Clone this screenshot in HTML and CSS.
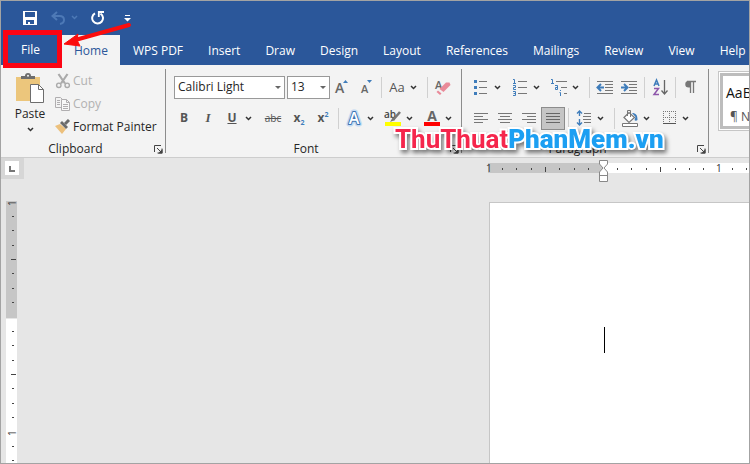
FILE: index.html
```html
<!DOCTYPE html>
<html lang="en">
<head>
<meta charset="utf-8">
<title>Document - Word</title>
<link rel="stylesheet" href="styles.css">
</head>
<body>
<svg class="defs" aria-hidden="true">
  <symbol id="chev" viewBox="0 0 7 5"><path d="M1 1l2.500 2.500L6 1" fill="none" stroke="#333" stroke-width="1.500"/></symbol>
  <symbol id="launch" viewBox="0 0 9 9"><path d="M.5 7V.5H7M3 3l4 4M8 3.500V8H3.500" fill="none" stroke="#444"/><path d="M8.500 4v4.500H4z" fill="#444"/></symbol>
</svg>
<div class="window">
  <header class="top">
    <div class="quick">
      <button class="q-save" aria-label="Save"><svg width="14" height="14" viewBox="0 0 14 14"><path d="M0 0h14v14H0zM2 1v5h10V1zM3 9v4h2v-2h2v2h4V9z" fill="#fff" fill-rule="evenodd"/></svg></button>
      <button class="q-undo" aria-label="Undo"><svg width="28" height="14" viewBox="0 0 28 14"><path d="M6 1L1.500 5 6 9M2 5h6.500c3 0 4.500 1.600 4.500 4s-1.500 3.500-4 4" fill="none" stroke="#4d79b6" stroke-width="2"/><path d="M21 5l2.500 2.500L26 5" fill="none" stroke="#4d79b6" stroke-width="1.500"/></svg></button>
      <button class="q-redo" aria-label="Repeat"><svg width="14" height="14" viewBox="0 0 14 14"><path d="M9.500 2.600A5.400 5.400 0 1 1 4 2.400" fill="none" stroke="#fff" stroke-width="2"/><path d="M7.800 6V1H13" fill="none" stroke="#fff" stroke-width="1.800"/></svg></button>
      <button class="q-more" aria-label="Customize toolbar"><svg width="7" height="7" viewBox="0 0 7 7"><path d="M1 0h5v1H1zM0 3h7L3.500 6.500z" fill="#fff"/></svg></button>
    </div>
    <nav class="tabs">
      <a class="file" href="#">File</a>
      <a class="active" href="#">Home</a>
      <a href="#">WPS PDF</a>
      <a href="#">Insert</a>
      <a href="#">Draw</a>
      <a href="#">Design</a>
      <a href="#">Layout</a>
      <a href="#">References</a>
      <a href="#">Mailings</a>
      <a href="#">Review</a>
      <a href="#">View</a>
      <a href="#">Help</a>
    </nav>
  </header>

  <section class="ribbon">
    <div class="group clipboard">
      <div class="clip-tools">
        <button class="paste">
          <svg width="28" height="30" viewBox="0 0 28 30"><path d="M0 4h24v24H0z" fill="#ecc67c"/><path d="M5 6V3h4a3 3 0 0 1 6 0h4v3z" fill="#6d6d6d"/><circle cx="12" cy="2.800" r="1" fill="#f3f3f3"/><path d="M14.500 11.500h8l5 5v13h-13z" fill="#fff" stroke="#6d6d6d"/><path d="M22.500 11.500v5h5" fill="none" stroke="#6d6d6d"/></svg>
          <span>Paste</span>
          <svg width="7" height="5"><use href="#chev"/></svg>
        </button>
        <div class="clip-list">
          <button disabled><svg width="16" height="16" viewBox="0 0 16 16"><path d="M3.500 1l6.500 9.500M12.500 1L6 10.500" stroke="#aaa" stroke-width="2.200"/><circle cx="3.800" cy="12.300" r="2.200" fill="none" stroke="#aaa" stroke-width="1.400"/><circle cx="12.200" cy="12.300" r="2.200" fill="none" stroke="#aaa" stroke-width="1.400"/></svg>Cut</button>
          <button disabled><svg width="16" height="16" viewBox="0 0 16 16"><path d="M6 11.500H.5V1.500h5l2 2" fill="none" stroke="#b0aeb0"/><path d="M2 4.500h3M2 6.500h3M2 8.500h3" stroke="#b0aeb0"/><path d="M6.500 3.500h5l3 3v8h-8z" fill="#f8f8f8" stroke="#b0aeb0"/><path d="M11.500 3.500v3h3M8 8.500h5M8 10.500h5M8 12.500h5" fill="none" stroke="#b0aeb0"/></svg>Copy</button>
          <button><svg width="16" height="16" viewBox="0 0 16 16"><path d="M0 7l5-2 6 5-4 5z" fill="#ecc07c"/><path d="M5 4l2-2 6 6-2 2z" fill="#6b6b6b"/><path d="M10 5l4-4" stroke="#6b6b6b" stroke-width="3"/></svg>Format Painter</button>
        </div>
      </div>
      <footer>Clipboard<button class="launcher" aria-label="Clipboard options"><svg width="9" height="9"><use href="#launch"/></svg></button></footer>
    </div>

    <div class="group font">
      <div class="row">
        <label class="combo family"><select aria-label="Font"><option>Calibri Light</option></select></label>
        <label class="combo size"><select aria-label="Font size"><option>13</option></select></label>
        <button class="tool" aria-label="Grow font"><svg width="18" height="18" viewBox="0 0 18 18"><text x="2" y="15" class="glyph grow">A</text><path d="M10 5l2.500-3L15 5z" fill="#3f7dbb"/></svg></button>
        <button class="tool" aria-label="Shrink font"><svg width="18" height="18" viewBox="0 0 18 18"><text x="4" y="15" class="glyph">A</text><path d="M10 2h5l-2.500 3z" fill="#3f7dbb"/></svg></button>
        <i class="sep"></i>
        <button class="split case"><span>Aa</span><svg width="7" height="5"><use href="#chev"/></svg></button>
        <i class="sep"></i>
        <button class="tool" aria-label="Clear formatting"><svg width="18" height="18" viewBox="0 0 18 18"><text x="1" y="11" class="glyph">A</text><path d="M5.500 11l6.500-6.500h3.500l1 2.500-7 7z" fill="#e98a99"/><path d="M4 12.500l3.500 3-1.500 1.500-3.500-3z" fill="#e98a99"/></svg></button>
      </div>
      <div class="row">
        <button class="tool bold">B</button>
        <button class="tool italic">I</button>
        <button class="split under"><span>U</span><svg width="7" height="5"><use href="#chev"/></svg></button>
        <button class="tool wide strike">abc</button>
        <button class="tool script">x<sub>2</sub></button>
        <button class="tool script">x<sup>2</sup></button>
        <i class="sep"></i>
        <button class="split" aria-label="Text effects"><svg width="18" height="18" viewBox="0 0 18 18"><text x="9" y="15" class="glyph halo">A</text><text x="9" y="15" class="glyph effect">A</text></svg><svg width="7" height="5"><use href="#chev"/></svg></button>
        <button class="split" aria-label="Highlight"><svg width="18" height="18" viewBox="0 0 18 18"><text x="0" y="9" class="glyph ab">ab</text><path d="M16 3L9 11" stroke="#777" stroke-width="2.600"/><path d="M9 8l-3 5 5-2z" fill="#777"/><path d="M1 13h16v4H1z" fill="#ff0"/></svg><svg width="7" height="5"><use href="#chev"/></svg></button>
        <button class="split" aria-label="Font color"><svg width="18" height="18" viewBox="0 0 18 18"><text x="9" y="12" class="glyph color">A</text><path d="M1 13h16v4H1z" fill="#f00"/></svg><svg width="7" height="5"><use href="#chev"/></svg></button>
      </div>
      <footer>Font<button class="launcher" aria-label="Font options"><svg width="9" height="9"><use href="#launch"/></svg></button></footer>
    </div>

    <div class="group paragraph">
      <div class="row">
        <button class="split" aria-label="Bullets"><svg width="18" height="18" viewBox="0 0 18 18"><path d="M7 3.500h8M7 9.500h8M7 15.500h8" stroke="#777"/><path d="M2 2h3v3H2zM2 8h3v3H2zM2 14h3v3H2z" fill="#3f7dbb"/></svg><svg width="7" height="5"><use href="#chev"/></svg></button>
        <button class="split" aria-label="Numbering"><svg width="18" height="18" viewBox="0 0 18 18"><path d="M7 3.500h9M7 9.500h9M7 15.500h9" stroke="#777"/><path d="M2 1.500h1.500V5M2 5.500h3M2 7.500h2.500v2h-2v2H5M2 13.500h2.500v4H2M2.500 15.500h2" fill="none" stroke="#3f7dbb"/></svg><svg width="7" height="5"><use href="#chev"/></svg></button>
        <button class="split" aria-label="Multilevel list"><svg width="18" height="18" viewBox="0 0 18 18"><path d="M6 3.500h11M11 9.500h6M14 15.500h3" stroke="#777"/><path d="M1 1.500h1.500V5M1 5.500h3M5 7.500h2.500v4H5.500v-2h2M10.500 12v1M9.500 14.500h1V18" fill="none" stroke="#3f7dbb"/></svg><svg width="7" height="5"><use href="#chev"/></svg></button>
        <i class="sep"></i>
        <button class="tool" aria-label="Decrease indent"><svg width="18" height="18" viewBox="0 0 18 18"><path d="M1 3.500h16M9 6.500h8M9 9.500h8M9 12.500h8M1 15.500h16" stroke="#777"/><path d="M8 9.500H2M5 6L1.500 9.500 5 13" fill="none" stroke="#3f7dbb" stroke-width="2"/></svg></button>
        <button class="tool" aria-label="Increase indent"><svg width="18" height="18" viewBox="0 0 18 18"><path d="M1 3.500h16M9 6.500h8M9 9.500h8M9 12.500h8M1 15.500h16" stroke="#777"/><path d="M1 9.500h6M4 6l3.500 3.500L4 13" fill="none" stroke="#3f7dbb" stroke-width="2"/></svg></button>
        <i class="sep"></i>
        <button class="tool" aria-label="Sort"><svg width="18" height="18" viewBox="0 0 18 18"><path d="M3 8l2.500-6L8 8M4 6h3" fill="none" stroke="#3f7dbb" stroke-width="1.500"/><path d="M3 10.500h4.500L3 16.500h5" fill="none" stroke="#8e57ab" stroke-width="1.500"/><path d="M13.500 2v14M10.500 12.500l3 3.500 3-3.500" fill="none" stroke="#666" stroke-width="1.300"/></svg></button>
        <i class="sep"></i>
        <button class="tool" aria-label="Show paragraph marks"><svg width="18" height="18" viewBox="0 0 18 18"><path d="M8 3v6.500H6.500a3.200 3.200 0 0 1 0-6.500z" fill="#777"/><path d="M5 3.500h9M8.500 3v12M11.500 3v12" stroke="#777" stroke-width="1.300"/></svg></button>
      </div>
      <div class="row">
        <button class="tool" aria-label="Align left"><svg width="18" height="18" viewBox="0 0 18 18"><path d="M2 4.500h14M2 7.500h9M2 10.500h14M2 13.500h9" stroke="#777"/></svg></button>
        <button class="tool" aria-label="Center"><svg width="18" height="18" viewBox="0 0 18 18"><path d="M2 4.500h14M4 7.500h10M2 10.500h14M4 13.500h10" stroke="#777"/></svg></button>
        <button class="tool" aria-label="Align right"><svg width="18" height="18" viewBox="0 0 18 18"><path d="M2 4.500h14M7 7.500h9M2 10.500h14M7 13.500h9" stroke="#777"/></svg></button>
        <button class="tool pressed" aria-label="Justify"><svg width="18" height="18" viewBox="0 0 18 18"><path d="M2 4.500h14M2 7.500h14M2 10.500h14M2 13.500h14" stroke="#666"/></svg></button>
        <i class="sep"></i>
        <button class="split" aria-label="Line spacing"><svg width="18" height="18" viewBox="0 0 18 18"><path d="M4.500 2v5M4.500 10v6M2 4.500L4.500 2 7 4.500M2 13.500L4.500 16 7 13.500" fill="none" stroke="#3f7dbb" stroke-width="1.400"/><path d="M9 4.500h7M8 7.500h8M8 10.500h8M9 13.500h7" stroke="#777"/></svg><svg width="7" height="5"><use href="#chev"/></svg></button>
        <i class="sep"></i>
        <button class="split" aria-label="Shading"><svg width="18" height="18" viewBox="0 0 18 18"><path d="M3 8.500l5-5 5.500 5L8 13.500z" fill="#fff" stroke="#777" stroke-width="1.200"/><path d="M6.500 7V1.500h3V8" fill="none" stroke="#777"/><path d="M11 4c4 0 5.500 2 5.500 7-1 1-2.500 1-3 0l1-3z" fill="#3f7dbb"/><path d="M1.500 14.500h15v3h-15z" fill="#fff" stroke="#777"/></svg><svg width="7" height="5"><use href="#chev"/></svg></button>
        <button class="split" aria-label="Borders"><svg width="18" height="18" viewBox="0 0 18 18"><path d="M3 2.500h13M3 8.500h13M3.500 2v12M9.500 2v12M15.500 2v12" stroke="#777" stroke-dasharray="1 1"/><path d="M3 14.500h13" stroke="#555"/></svg><svg width="7" height="5"><use href="#chev"/></svg></button>
      </div>
      <footer>Paragraph<button class="launcher" aria-label="Paragraph options"><svg width="9" height="9"><use href="#launch"/></svg></button></footer>
    </div>

    <div class="gallery">
      <button class="style"><span class="sample">AaBbCcDd</span><span class="name">¶ Normal</span></button>
    </div>
  </section>

  <main class="workspace">
    <div class="corner"><button aria-label="Tab stop"><svg width="14" height="14" viewBox="0 0 14 14"><path d="M4 5h2v4h4v2H4z" fill="#777"/></svg></button></div>
    <div class="hruler">
      <svg width="100%" height="12">
        <rect width="115" height="10" fill="#c6c6c6"/>
        <rect x="115" width="100%" height="10" fill="#fff"/>
        <path d="M14.500 5v2M28.500 5v2M43.500 5v2M57.500 4v5M71.500 5v2M86.500 5v2M100.500 5v2M129.500 5v2M143.500 5v2M158.500 5v2M172.500 4v5M187.500 5v2M201.500 5v2M215.500 5v2M244.500 5v2M258.500 5v2" stroke="#444"/>
        <text x="-2" y="9">1</text><text x="228" y="9">1</text>
      </svg>
      <svg class="indent" width="9" height="22" viewBox="0 0 9 22"><path d="M.5.5h8V4L5 8l3.500 4v9.500h-8V12L4 8 .5 4zM.5 15.500h8" fill="#fff" stroke="#888"/></svg>
    </div>
    <div class="vruler">
      <svg width="12" height="100%">
        <rect width="11" height="117" fill="#c6c6c6"/>
        <rect y="118" width="11" height="100%" fill="#fff"/>
        <path d="M6 15.500h2M6 29.500h2M6 44.500h2M5 58.500h5M6 72.500h2M6 87.500h2M6 101.500h2M6 130.500h2M6 144.500h2M6 159.500h2M5 173.500h5M6 187.500h2M6 202.500h2M6 216.500h2M6 245.500h2M6 259.500h2" stroke="#444"/>
        <text transform="translate(10 5) rotate(-90)">1</text><text transform="translate(10 235) rotate(-90)">1</text>
      </svg>
    </div>
    <article class="page" contenteditable="true" aria-label="Document"><i class="caret"></i></article>
  </main>

  <div class="file-frame"></div>
  <svg class="arrow" width="72" height="30" viewBox="0 0 72 30"><path d="M66 4L14 18.500" stroke="#fb0d0d" stroke-width="4" stroke-linecap="round"/><path d="M1 23L15 13l-1 6 3 6z" fill="#fb0d0d" stroke="#fb0d0d"/></svg>
  <div class="mark"><span>ThuThuat</span><b>PhanMem.vn</b></div>
</div>
</body>
</html>
```
FILE: styles.css
```css
* { box-sizing: border-box; }
body {
  margin: 0;
  font: 12px/16px "Open Sans", "Noto Sans", sans-serif;
  color: #262626;
}
button { font: inherit; color: inherit; background: none; border: 0; padding: 0; }
svg { display: block; flex: none; }
.defs { position: absolute; width: 0; height: 0; }

.window {
  position: relative;
  display: flex;
  flex-direction: column;
  min-height: 100vh;
  border: 1px solid #a3a3a3;
  background: #e6e6e6;
  overflow: hidden;
}

.top { background: #2b579a; }
.quick { display: flex; align-items: center; height: 34px; padding-left: 22px; }
.q-undo { margin-left: 14px; }
.q-redo { margin-left: 12px; }
.q-more { margin-left: 19px; }
.tabs { display: flex; height: 30px; line-height: 31px; }
.tabs a { flex: none; padding: 0 12px 0 13px; color: #fff; text-decoration: none; }
.tabs .file { width: 61px; padding: 0 20px; line-height: 29px; }
.tabs .active { background: #f3f3f3; color: #2b579a; padding-left: 12px; }

.ribbon {
  display: flex;
  height: 93px;
  background: #f3f3f3;
  border-bottom: 1px solid #cdcdcd;
  overflow: hidden;
}
.group { position: relative; flex: none; padding-top: 10px; }
.group::after {
  content: "";
  position: absolute;
  top: 4px;
  right: 0;
  width: 1px;
  height: 84px;
  background: #8c8c8c;
}
.group footer { position: absolute; left: 0; right: 0; bottom: 0; text-align: center; }
.launcher { position: absolute; right: 3px; top: 4px; }
.clipboard { width: 165px; padding-top: 4px; }
.clipboard footer { padding-right: 16px; }
.font { width: 296px; padding-left: 6px; }
.font footer { padding-right: 16px; }
.paragraph { width: 247px; padding-left: 7px; }
.paragraph footer { padding-right: 16px; }

.clip-tools { display: flex; }
.paste {
  display: flex;
  flex-direction: column;
  align-items: center;
  width: 54px;
  padding: 4px 0 0 4px;
}
.paste span { line-height: 22px; }
.paste svg + span + svg { margin-top: 2px; }
.clip-list { display: flex; flex-direction: column; }
.clip-list button { display: flex; align-items: center; gap: 2px; height: 23px; white-space: nowrap; }
.clip-list button:disabled { color: #b1b1b1; }

.row { display: flex; align-items: center; height: 24px; margin-bottom: 7px; color: #555; }
.row > * { flex: none; }
.tool { display: flex; align-items: center; justify-content: center; width: 24px; height: 24px; }
.wide { width: 28px; }
.split { display: flex; align-items: center; gap: 4px; width: 39px; height: 24px; padding-left: 3px; }
.split span { width: 18px; text-align: center; }
.sep { width: 1px; height: 21px; margin: 0 3px; background: #d0d0d0; }
.pressed { height: 23px; background: #c5c5c5; border: 1px solid #8c8c8c; }
.bold, .script { font-weight: 700; }
.italic { font: italic 700 13px "Liberation Serif", serif; }
.under span { font-weight: 700; text-decoration: underline; }
.strike { font-size: 10px; text-decoration: line-through; }
.case { font-size: 13px; }
.script sub, .script sup { font-size: 7px; line-height: 8px; color: #3f7dbb; }
.script sub { padding-top: 9px; }
.script sup { padding-bottom: 7px; }
.glyph { font: 600 11px "Open Sans", sans-serif; fill: #666; }
.grow { font-size: 14px; }
.ab { font-size: 10px; fill: #444; }
.color { font-size: 14px; font-weight: 700; text-anchor: middle; }
.effect, .halo { font-size: 16px; text-anchor: middle; paint-order: stroke; stroke-linejoin: round; }
.effect { fill: #fff; stroke: #3d74b4; stroke-width: 2px; }
.halo { stroke: #c3daf2; stroke-width: 5px; }

.combo { position: relative; height: 23px; margin-left: 2px; }
.family { width: 111px; }
.size { width: 43px; }
.combo select {
  appearance: none;
  width: 100%;
  height: 100%;
  padding: 0 0 0 3px;
  border: 1px solid #999;
  border-radius: 0;
  background: #fff;
  font: inherit;
  color: #262626;
}
.combo::after {
  content: "";
  position: absolute;
  right: 4px;
  top: 10px;
  border: 3px solid transparent;
  border-top-color: #666;
}

.gallery { flex: 1; min-width: 0; margin: 6px 0 0 9px; overflow: hidden; }
.style {
  display: flex;
  flex-direction: column;
  width: 90px;
  height: 60px;
  padding: 7px 2px 0 7px;
  border: 1px solid #c6c6c6;
  outline: 3px solid #bdbdbd;
  outline-offset: -5px;
  background: #fff;
  text-align: left;
  white-space: nowrap;
}
.sample { font: 14px/28px "Open Sans", sans-serif; color: #111; }
.name { padding-left: 4px; color: #555; line-height: 20px; }

.workspace {
  flex: 1;
  display: grid;
  grid-template-columns: 24px minmax(0, 1fr);
  grid-template-rows: 43px 1fr;
}
.corner { width: 23px; height: 21px; padding: 3px 4px; background: #d6d6d6; }
.corner button { background: #fff; }
.hruler { position: relative; padding: 5px 0 0 463px; }
.indent { position: absolute; left: 574px; top: 2px; }
.hruler text, .vruler text { font: 10px "Open Sans", sans-serif; fill: #333; }
.hruler svg, .vruler svg { overflow: visible; }
.vruler { padding-left: 5px; }
.page {
  margin: 1px 0 0 464px;
  padding: 124px 0 0 114px;
  border: 1px solid #c6c6c6;
  border-width: 1px 0 0 1px;
  background: #fff;
}
.caret { display: block; width: 1px; height: 26px; background: #000; }

.file-frame {
  position: absolute;
  left: 2px;
  top: 29px;
  width: 59px;
  height: 38px;
  border: 5px solid #fc0413;
}
.arrow { position: absolute; left: 62px; top: 20px; }
.mark {
  position: absolute;
  left: 394px;
  top: 120px;
  font: 700 26px/36px Roboto, "Liberation Sans", sans-serif;
  color: #f5264c;
  white-space: nowrap;
  paint-order: stroke fill;
  -webkit-text-stroke: 4px #fff;
  filter: drop-shadow(2px 3px 2px rgba(0, 0, 0, .5));
  pointer-events: none;
}
.mark b { color: #1c9ff2; }
```
